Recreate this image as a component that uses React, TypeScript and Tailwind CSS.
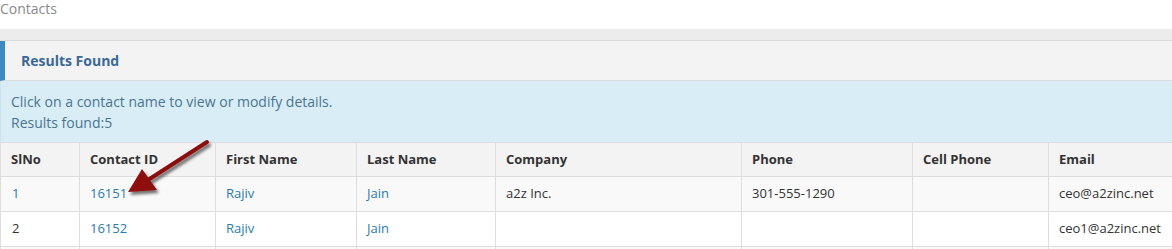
import React from "react";

type Contact = {
  id: string;
  first: string;
  last: string;
  company: string;
  phone: string;
  cell: string;
  email: string;
};

const contacts: Contact[] = [
  { id: "16151", first: "Rajiv", last: "Jain", company: "a2z Inc.", phone: "301-555-1290", cell: "", email: "ceo@a2zinc.net" },
  { id: "16152", first: "Rajiv", last: "Jain", company: "", phone: "", cell: "", email: "ceo1@a2zinc.net" },
  { id: "16153", first: "Rajiv", last: "Jain", company: "", phone: "", cell: "", email: "ceo2@a2zinc.net" },
  { id: "16154", first: "Rajiv", last: "Jain", company: "", phone: "", cell: "", email: "ceo3@a2zinc.net" },
  { id: "16155", first: "Rajiv", last: "Jain", company: "", phone: "", cell: "", email: "ceo4@a2zinc.net" },
];

const columns = [
  { label: "SlNo", w: "w-[79px]" },
  { label: "Contact ID", w: "w-[136px]" },
  { label: "First Name", w: "w-[141px]" },
  { label: "Last Name", w: "w-[139px]" },
  { label: "Company", w: "w-[246px]" },
  { label: "Phone", w: "w-[171px]" },
  { label: "Cell Phone", w: "w-[136px]" },
  { label: "Email", w: "w-[180px]" },
];

function Arrow() {
  // red pointer drawn over the Contact ID column
  return (
    <svg
      className="pointer-events-none absolute left-[120px] top-[135px]"
      width="100"
      height="70"
      viewBox="0 0 100 70"
    >
      <defs>
        <filter id="shadow" x="-20%" y="-20%" width="150%" height="160%">
          <feGaussianBlur in="SourceAlpha" stdDeviation="1.6" />
          <feOffset dx="2" dy="3" result="b" />
          <feComponentTransfer>
            <feFuncA type="linear" slope="0.55" />
          </feComponentTransfer>
          <feMerge>
            <feMergeNode />
            <feMergeNode in="SourceGraphic" />
          </feMerge>
        </filter>
      </defs>
      <g filter="url(#shadow)">
        <line x1="87" y1="7" x2="28" y2="45" stroke="#8e0b0b" strokeWidth="4" strokeLinecap="round" />
        <polygon points="8,57 22,34 37,55" fill="#8e0b0b" />
      </g>
    </svg>
  );
}

export default function App() {
  return (
    <div className="relative w-[1172px] overflow-hidden bg-white font-['Open_Sans',sans-serif]">
      <div className="h-[29px] text-[14px] leading-[17px] text-[#8a8a8a]">Contacts</div>
      <div className="bg-[#ececec] pt-[11px]">
        <div className="w-[1200px] border-t border-[#dcdcdc] bg-white">
          <div className="flex h-[40px] items-center border-b border-l-[5px] border-[#dcdcdc] border-l-[#3f88c8] bg-[#f3f3f3] pl-[16px]">
            <span className="text-[14px] font-bold text-[#3a6898]">Results Found</span>
          </div>
          <div className="border-l border-[#cfe3ee] bg-[#d9edf7] px-[10px] pb-[9px] pt-[10px] text-[14px] leading-[21px] text-[#4a7590]">
            <div>Click on a contact name to view or modify details.</div>
            <div>Results found:5</div>
          </div>
          <table className="w-[1200px] table-fixed border-collapse text-[13px] text-[#333]">
            <thead>
              <tr className="h-[34px] bg-[#f3f3f3]">
                {columns.map((c) => (
                  <th
                    key={c.label}
                    className={`${c.w} border border-[#dddddd] px-[10px] text-left font-bold`}
                  >
                    {c.label}
                  </th>
                ))}
              </tr>
            </thead>
            <tbody>
              {contacts.map((c, i) => (
                <tr key={c.id} className={`h-[35px] ${i % 2 === 0 ? "bg-[#f9f9f9]" : "bg-white"}`}>
                  <td className="border border-[#dddddd] px-[11px]">
                    <span className={i === 0 ? "text-[#2a7ab4]" : "text-[#333]"}>{i + 1}</span>
                  </td>
                  <td className="border border-[#dddddd] px-[10px] text-[#2a7ab4]">{c.id}</td>
                  <td className="border border-[#dddddd] px-[10px] text-[#2a7ab4]">{c.first}</td>
                  <td className="border border-[#dddddd] px-[10px] text-[#2a7ab4]">{c.last}</td>
                  <td className="border border-[#dddddd] px-[10px]">{c.company}</td>
                  <td className="border border-[#dddddd] px-[10px]">{c.phone}</td>
                  <td className="border border-[#dddddd] px-[10px]">{c.cell}</td>
                  <td className="border border-[#dddddd] px-[10px]">{c.email}</td>
                </tr>
              ))}
            </tbody>
          </table>
        </div>
      </div>
      <Arrow />
    </div>
  );
}
